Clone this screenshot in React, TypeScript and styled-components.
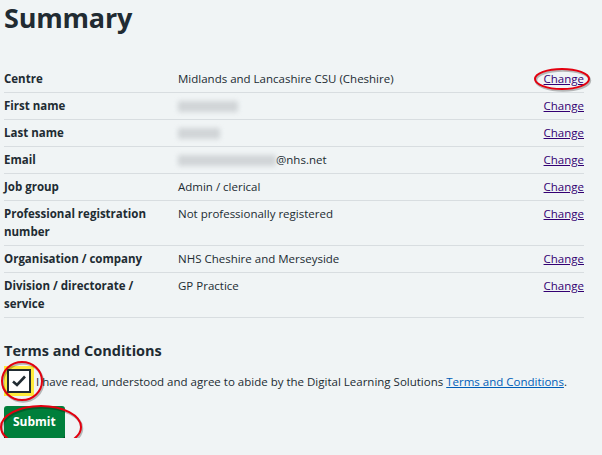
import styled, { createGlobalStyle } from "styled-components";

const GlobalStyle = createGlobalStyle`
  html, body {
    margin: 0;
    padding: 0;
    background: #f0f4f5;
  }
  body {
    font-family: "Open Sans", "Noto Sans", sans-serif;
    color: #212b32;
  }
`;

type Row = {
  label: string;
  value?: string;
  blur?: number;
  suffix?: string;
  circled?: boolean;
};

const rows: Row[] = [
  { label: "Centre", value: "Midlands and Lancashire CSU (Cheshire)", circled: true },
  { label: "First name", blur: 60 },
  { label: "Last name", blur: 42 },
  { label: "Email", blur: 98, suffix: "@nhs.net" },
  { label: "Job group", value: "Admin / clerical" },
  { label: "Professional registration number", value: "Not professionally registered" },
  { label: "Organisation / company", value: "NHS Cheshire and Merseyside" },
  { label: "Division / directorate / service", value: "GP Practice" },
];

const Page = styled.main`
  padding: 0 18px 0 4px;
`;

const Heading = styled.h1`
  margin: 0;
  padding-top: 2px;
  font-size: 27px;
  line-height: 32px;
  font-weight: 700;
  letter-spacing: -0.2px;
`;

const List = styled.dl`
  margin: 32px 0 0;
`;

const SummaryRow = styled.div`
  display: grid;
  grid-template-columns: 174px 1fr auto;
  border-bottom: 1px solid #d8dde0;
  padding: 4px 0;
  font-size: 11.5px;
  line-height: 18px;
`;

const Key = styled.dt`
  font-weight: 700;
  padding-right: 20px;
`;

const Value = styled.dd`
  margin: 0;
  display: flex;
  align-items: center;
  align-self: start;
  height: 18px;
`;

const Blurred = styled.span<{ $w: number }>`
  display: inline-block;
  width: ${(p) => p.$w}px;
  height: 11px;
  background: #c9cdd0;
  filter: blur(2.5px);
  opacity: 0.8;
`;

const Action = styled.dd`
  margin: 0;
  position: relative;
`;

const ChangeLink = styled.a`
  color: #330072;
  text-decoration: underline;
  cursor: pointer;
`;

const Ring = styled.svg`
  position: absolute;
  pointer-events: none;
  overflow: visible;
`;

const TermsHeading = styled.h2`
  margin: 23px 0 0;
  font-size: 14.5px;
  line-height: 20px;
  font-weight: 700;
`;

const CheckRow = styled.div`
  display: flex;
  align-items: center;
  gap: 5px;
  margin-top: 8px;
  font-size: 11.5px;
  line-height: 17px;
`;

const BoxWrap = styled.div`
  position: relative;
  margin-left: 3px;
`;

const Box = styled.span`
  display: flex;
  align-items: center;
  justify-content: center;
  width: 20px;
  height: 20px;
  border: 2px solid #212b32;
  background: #fff;
  box-shadow: 0 0 0 3px #ffeb3b;
`;

const TermsLink = styled.a`
  color: #005eb8;
  text-decoration: underline;
`;

const ButtonWrap = styled.div`
  position: relative;
  display: inline-block;
  margin-top: 13px;
`;

const Button = styled.button`
  font-family: inherit;
  font-size: 12px;
  font-weight: 700;
  color: #fff;
  background: #007f3b;
  border: 0;
  border-radius: 3px;
  box-shadow: 0 3px 0 #00401e;
  padding: 8px 9px;
  line-height: 16px;
`;

const RedEllipse = ({ w, h, style }: { w: number; h: number; style: React.CSSProperties }) => (
  <Ring width={w} height={h} style={style}>
    <ellipse cx={w / 2 + 1} cy={h / 2 + 1.5} rx={w / 2 - 2} ry={h / 2 - 2} fill="none" stroke="rgba(0,0,0,0.25)" strokeWidth={2.5} />
    <ellipse cx={w / 2} cy={h / 2} rx={w / 2 - 2} ry={h / 2 - 2} fill="none" stroke="#e3000f" strokeWidth={2} />
  </Ring>
);

export default function App() {
  return (
    <>
      <GlobalStyle />
      <Page>
        <Heading>Summary</Heading>
        <List>
          {rows.map((row) => (
            <SummaryRow key={row.label}>
              <Key>{row.label}</Key>
              <Value>
                {row.blur ? <Blurred $w={row.blur} /> : row.value}
                {row.suffix}
              </Value>
              <Action>
                <ChangeLink>Change</ChangeLink>
                {row.circled && <RedEllipse w={58} h={24} style={{ left: -11, top: -3 }} />}
              </Action>
            </SummaryRow>
          ))}
        </List>
        <TermsHeading>Terms and Conditions</TermsHeading>
        <CheckRow>
          <BoxWrap>
            <Box>
              <svg width="16" height="14" viewBox="0 0 16 14">
                <path d="M2 7.5 L6 11 L14 2.5" fill="none" stroke="#212b32" strokeWidth="2.6" />
              </svg>
            </Box>
            <RedEllipse w={44} h={42} style={{ left: -7, top: -9 }} />
          </BoxWrap>
          <span>
            I have read, understood and agree to abide by the Digital Learning Solutions{" "}
            <TermsLink>Terms and Conditions</TermsLink>.
          </span>
        </CheckRow>
        <ButtonWrap>
          <Button>Submit</Button>
          <RedEllipse w={84} h={46} style={{ left: -5, top: -2 }} />
        </ButtonWrap>
      </Page>
    </>
  );
}
